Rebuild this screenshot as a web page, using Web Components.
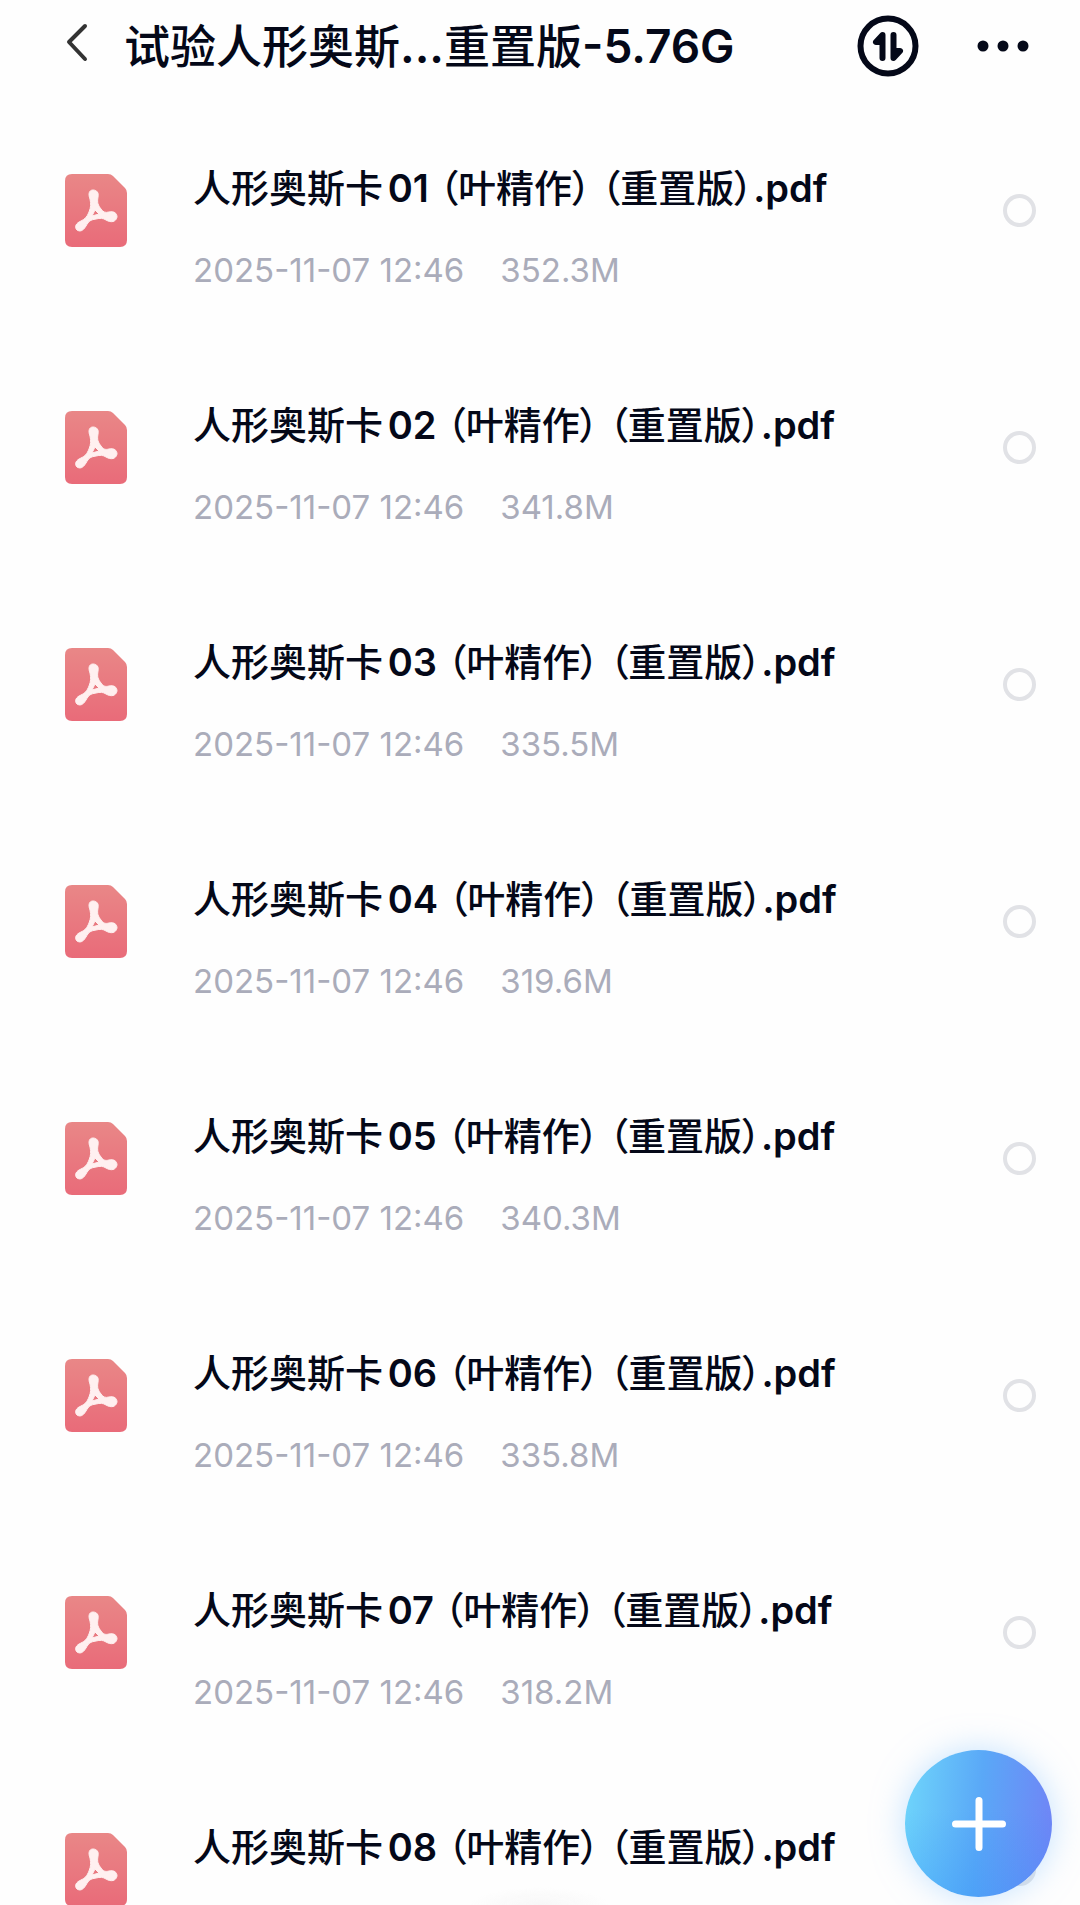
<!DOCTYPE html>
<html lang="zh-CN">
<head>
    <meta charset="UTF-8">
    <meta name="viewport" content="width=device-width, initial-scale=1">
    <title>试验人形奥斯卡重置版</title>
    <style>
        body {
            margin: 0;
            background: #fefefe;
            color: #040818;
            font-family: Inter, "Noto Sans CJK SC", sans-serif;
        }
    </style>

    <template id="headerTemplate">
        <style>
            :host {
                display: flex;
                align-items: center;
                flex: none;
                height: 91px;
                padding: 0 45px 0 56px;
            }
            button {
                display: flex;
                flex: none;
                padding: 0;
                border: 0;
                background: none;
                color: inherit;
                cursor: pointer;
            }
            h1 {
                flex: 1;
                margin: 0 24px 0 26px;
                font-size: 46px;
                line-height: 64px;
                font-weight: 500;
                white-space: nowrap;
            }
            ::slotted(b) {
                font-weight: 600;
            }
            .sort {
                margin-right: 56px;
            }
        </style>
        <button class="back" aria-label="返回">
            <svg width="42" height="48" viewBox="0 0 42 48" fill="none" stroke="#333" stroke-width="4" stroke-linecap="round" stroke-linejoin="round"><path d="M29 4 13 20l16 17"/></svg>
        </button>
        <h1><slot></slot></h1>
        <button class="sort" aria-label="排序">
            <svg width="62" height="62" viewBox="0 0 62 62" fill="currentColor" stroke="currentColor" stroke-width="6" stroke-linecap="round" stroke-linejoin="round">
                <circle cx="31" cy="31" r="27.5" fill="none"/>
                <path d="M25.500 43V20L19 27h6.500z"/>
                <path d="M36.500 20V43L43 36h-6.500z"/>
            </svg>
        </button>
        <button class="more" aria-label="更多">
            <svg width="60" height="48" viewBox="0 0 60 48" fill="currentColor"><circle cx="8" cy="24" r="5.500"/><circle cx="28" cy="24" r="5.500"/><circle cx="48" cy="24" r="5.500"/></svg>
        </button>
    </template>

    <template id="rowTemplate">
        <style>
            :host {
                display: flex;
                align-items: flex-start;
                gap: 66px;
                padding: 44px 44px 63px 65px;
            }
            .icon {
                display: block;
                flex: none;
                margin-top: 14px;
            }
            .info {
                display: flex;
                flex: 1;
                flex-direction: column;
                gap: 34px;
                min-width: 0;
            }
            label {
                font-size: 38px;
                line-height: 56px;
                font-weight: 500;
                font-feature-settings: "palt";
                text-autospace: normal;
                white-space: nowrap;
            }
            ::slotted(b) {
                font-weight: 600;
            }
            .meta {
                display: flex;
                gap: 36px;
                min-height: 40px;
                color: #aaacba;
                font-size: 33px;
                line-height: 40px;
            }
            input {
                appearance: none;
                flex: none;
                box-sizing: border-box;
                width: 33px;
                height: 33px;
                margin: 34px 0 0;
                border: 4px solid #e1e2e6;
                border-radius: 50%;
            }
            input:checked {
                border-color: #529bf8;
                background: #529bf8;
            }
        </style>
        <svg class="icon" width="62" height="73" viewBox="0 0 62 73">
            <defs>
                <linearGradient id="paper" x1="0" y1="0" x2="0" y2="1">
                    <stop offset="0" stop-color="#e98787"/>
                    <stop offset="1" stop-color="#e96b79"/>
                </linearGradient>
            </defs>
            <path d="M7 0H43Q46 0 48 2L60 14Q62 16 62 19V66Q62 73 55 73H7Q0 73 0 66V7Q0 0 7 0Z" fill="url(#paper)"/>
            <path d="M28 16C32 16 34 19 33 23C32 29 33 31 36 35C38 38 40 39 44 38C49 37 52 39 52 43C51 48 46 49 41 46C38 44 35 44 31 45C25 46 24 47 21 52C18 57 15 58 12 56C9 53 11 49 16 47C20 45 22 43 24 38C26 33 26 30 25 25C23 20 24 16 28 16ZM30 36L27 42L34 40Z" fill="#fff0f0" stroke="#fff0f0" fill-rule="evenodd"/>
        </svg>
        <div class="info">
            <label for="pick"><slot></slot></label>
            <div class="meta"><time></time><span class="size"></span></div>
        </div>
        <input type="checkbox" id="pick">
    </template>

    <template id="addTemplate">
        <style>
            :host {
                position: fixed;
                right: 28px;
                bottom: 8px;
            }
            button {
                display: flex;
                align-items: center;
                justify-content: center;
                width: 147px;
                height: 147px;
                padding: 0;
                border: 0;
                border-radius: 50%;
                background:
                    linear-gradient(to bottom, transparent 40%, #2f93f84d),
                    linear-gradient(95deg, #6fd6fb, #5aa8f7 50%, #6f86f6 95%);
                box-shadow: 0 0 32px #8cc8ff80;
                cursor: pointer;
            }
        </style>
        <button aria-label="添加">
            <svg width="56" height="56" viewBox="0 0 56 56" stroke="#fff" stroke-width="7" stroke-linecap="round"><path d="M28 4.500v47M4.500 28h47"/></svg>
        </button>
    </template>

    <template id="driveTemplate">
        <style>
            :host {
                display: flex;
                flex-direction: column;
                height: 100vh;
            }
            main {
                flex: 1;
                min-height: 0;
                padding-top: 25px;
                overflow-y: auto;
                scrollbar-width: none;
            }
            /* soft shade at the bottom edge of the list */
            .shade {
                position: fixed;
                left: 50%;
                bottom: 0;
                width: 140px;
                height: 18px;
                margin-left: -70px;
                background: radial-gradient(ellipse at bottom, #f7f7f7, transparent 70%);
            }
        </style>
        <slot name="header"></slot>
        <main><slot></slot></main>
        <div class="shade"></div>
        <slot name="action"></slot>
    </template>
</head>
<body>
<drive-page>
    <drive-header slot="header">试验人形奥斯<b>...</b>重置版<b>-5.76G</b></drive-header>
    <file-row date="2025-11-07 12:46" size="352.3M">人形奥斯卡<b>01</b> （叶精作） （重置版）<b>.pdf</b></file-row>
    <file-row date="2025-11-07 12:46" size="341.8M">人形奥斯卡<b>02</b> （叶精作） （重置版）<b>.pdf</b></file-row>
    <file-row date="2025-11-07 12:46" size="335.5M">人形奥斯卡<b>03</b> （叶精作） （重置版）<b>.pdf</b></file-row>
    <file-row date="2025-11-07 12:46" size="319.6M">人形奥斯卡<b>04</b> （叶精作） （重置版）<b>.pdf</b></file-row>
    <file-row date="2025-11-07 12:46" size="340.3M">人形奥斯卡<b>05</b> （叶精作） （重置版）<b>.pdf</b></file-row>
    <file-row date="2025-11-07 12:46" size="335.8M">人形奥斯卡<b>06</b> （叶精作） （重置版）<b>.pdf</b></file-row>
    <file-row date="2025-11-07 12:46" size="318.2M">人形奥斯卡<b>07</b> （叶精作） （重置版）<b>.pdf</b></file-row>
    <file-row>人形奥斯卡<b>08</b> （叶精作） （重置版）<b>.pdf</b></file-row>
    <add-button slot="action"></add-button>
</drive-page>

<script>
    class TemplateElement extends HTMLElement {
        constructor() {
            super();
            const shadowRoot = this.attachShadow({ mode: 'open' });
            const fragment = document.getElementById(this.constructor.template).content.cloneNode(true);
            shadowRoot.appendChild(fragment);
        }
    }

    class DrivePage extends TemplateElement {
        static template = 'driveTemplate';
    }

    class DriveHeader extends TemplateElement {
        static template = 'headerTemplate';
    }

    class AddButton extends TemplateElement {
        static template = 'addTemplate';
    }

    class FileRow extends TemplateElement {
        static template = 'rowTemplate';

        connectedCallback() {
            this.shadowRoot.querySelector('time').textContent = this.getAttribute('date') || '';
            this.shadowRoot.querySelector('.size').textContent = this.getAttribute('size') || '';
        }
    }

    window.customElements.define('drive-page', DrivePage);
    window.customElements.define('drive-header', DriveHeader);
    window.customElements.define('file-row', FileRow);
    window.customElements.define('add-button', AddButton);
</script>
</body>
</html>
